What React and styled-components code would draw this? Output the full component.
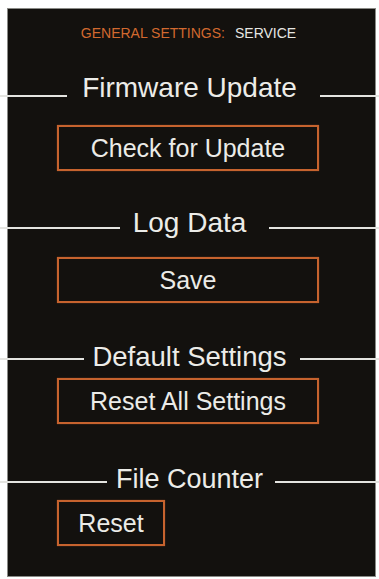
import React from "react";
import styled, { createGlobalStyle } from "styled-components";

const Global = createGlobalStyle`
  html, body { margin: 0; padding: 0; background: #ffffff; }
  body { font-family: "Liberation Sans", Arial, sans-serif; }
`;

const Page = styled.div`
  width: 379px;
  height: 579px;
  box-sizing: border-box;
  padding: 9px 4px 3px 8px;
  overflow: hidden;
`;

const Panel = styled.div`
  height: 100%;
  box-sizing: border-box;
  background: #13110e;
  box-shadow: 0 0 0 1px #8a8a86;
  display: flex;
  flex-direction: column;
`;

const Title = styled.div`
  margin: 16px 6px 0 0;
  font-size: 14px;
  line-height: 16px;
  text-align: center;
  white-space: nowrap;
`;

const TitleKey = styled.span`
  color: #d2692f;
`;

const TitleValue = styled.span`
  color: #e6e6e2;
  margin-left: 10px;
`;

const Heading = styled.div`
  margin: ${(p) => p.$top}px -4px 0 -8px;
  display: grid;
  grid-template-columns: 1fr auto 1fr;
  align-items: start;
  height: 32px;
`;

const Rule = styled.div`
  height: 2px;
  background: #e4e4e0;
  margin-top: ${(p) => p.$offset}px;
  margin-left: ${(p) => p.$ml || 0}px;
  margin-right: ${(p) => p.$mr || 0}px;
`;

const HeadingText = styled.div`
  color: #ececE8;
  font-size: ${(p) => p.$size}px;
  line-height: 32px;
  white-space: nowrap;
`;

const Button = styled.button`
  margin: ${(p) => p.$top}px 0 0 49px;
  align-self: flex-start;
  width: ${(p) => p.$w}px;
  height: 46px;
  box-sizing: border-box;
  border: 2px solid #c6632e;
  box-shadow: 0 0 1px rgba(210, 105, 50, 0.6);
  background: #13110e;
  color: #ebebe7;
  font-family: "Liberation Sans", Arial, sans-serif;
  font-size: 25px;
  line-height: 30px;
  padding: 0;
  text-align: center;
  cursor: pointer;
`;

const sections = [
  { title: "Firmware Update", size: 28, top: 31, offset: 23, gl: 15, gr: 23, btn: "Check for Update", btnTop: 21, w: 262 },
  { title: "Log Data", size: 28, top: 36, offset: 20, gl: 13, gr: 23, btn: "Save", btnTop: 18, w: 262 },
  { title: "Default Settings", size: 27.5, top: 38, offset: 17, gl: 8, gr: 13, btn: "Reset All Settings", btnTop: 5, w: 262 },
  { title: "File Counter", size: 27, top: 39, offset: 18, gl: 9, gr: 12, btn: "Reset", btnTop: 5, w: 108 },
];

export default function App() {
  return (
    <>
      <Global />
      <Page>
        <Panel>
          <Title>
            <TitleKey>GENERAL SETTINGS:</TitleKey>
            <TitleValue>SERVICE</TitleValue>
          </Title>
          {sections.map((s) => (
            <React.Fragment key={s.title}>
              <Heading $top={s.top}>
                <Rule $offset={s.offset} $mr={s.gl} />
                <HeadingText $size={s.size}>{s.title}</HeadingText>
                <Rule $offset={s.offset} $ml={s.gr} />
              </Heading>
              <Button $top={s.btnTop} $w={s.w}>{s.btn}</Button>
            </React.Fragment>
          ))}
        </Panel>
      </Page>
    </>
  );
}
